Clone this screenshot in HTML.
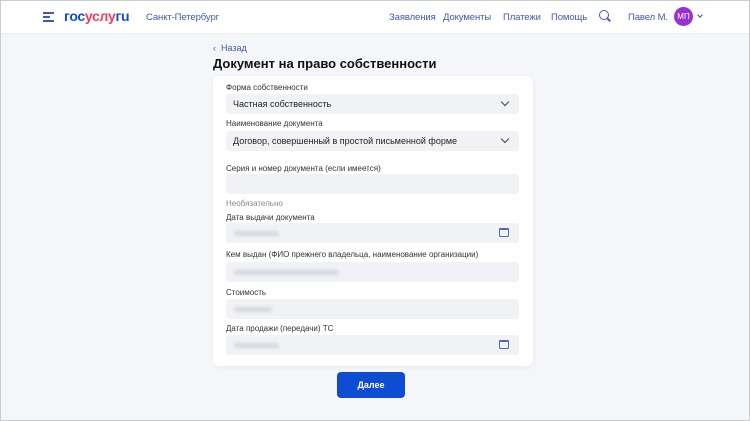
<!DOCTYPE html><html><head><meta charset="utf-8"><style>
*{margin:0;padding:0;box-sizing:border-box}
body{width:750px;height:421px;overflow:hidden;background:#f4f6fa;font-family:"Liberation Sans",sans-serif;position:relative;border:1px solid #c9ccd1}
.hdr{position:absolute;left:0;top:0;width:748px;height:33px;background:#fff;border-bottom:1px solid #eceff3}
.a{position:absolute;white-space:nowrap}
.nav{font-size:9.5px;color:#3f5ba9;top:11px;letter-spacing:-.1px}
.card{position:absolute;left:212px;top:75px;width:320px;height:290px;background:#fff;border-radius:6px;box-shadow:0 1px 4px rgba(0,0,0,.06)}
.lb{position:absolute;left:225px;font-size:8px;color:#333}
.f{position:absolute;left:225px;width:293px;height:20px;background:#f0f2f5;border-radius:3px}
.f span{position:absolute;left:7px;top:5px;font-size:9px;color:#222}
.bl{position:absolute;left:8px;top:8px;height:5px;background:#d5d8de;border-radius:3px;filter:blur(1.5px)}
.chev{position:absolute;right:11px;top:5px;width:6px;height:6px;border-right:1.5px solid #444;border-bottom:1.5px solid #444;transform:rotate(45deg)}
.cal{position:absolute;right:10px;top:5px;width:10px;height:9px;border:1.3px solid #4d6ac2;border-radius:1px;border-top-width:2.5px}
</style></head><body>
<div class="hdr"></div>
<div class="a" style="left:42px;top:11px;width:11px;height:2px;background:#3f5ba9"></div>
<div class="a" style="left:42px;top:15px;width:7px;height:2px;background:#3f5ba9"></div>
<div class="a" style="left:42px;top:19px;width:11px;height:2px;background:#3f5ba9"></div>
<div class="a" style="left:63px;top:7px;font-size:14px;font-weight:bold;color:#0d4cd3;letter-spacing:-.3px">гос<span style="color:#ee3f58">услу</span>гu</div>
<div class="a nav" style="left:145px">Санкт-Петербург</div>
<div class="a nav" style="left:388px">Заявления</div>
<div class="a nav" style="left:442px">Документы</div>
<div class="a nav" style="left:502px">Платежи</div>
<div class="a nav" style="left:550px">Помощь</div>
<div class="a" style="left:598px;top:9px;width:10px;height:10px;border:1.6px solid #3f5ba9;border-radius:50%"></div>
<div class="a" style="left:606px;top:18px;width:4px;height:1.6px;background:#3f5ba9;transform:rotate(45deg)"></div>
<div class="a nav" style="left:627px">Павел М.</div>
<div class="a" style="left:673px;top:6px;width:19px;height:19px;border-radius:50%;background:#9b2fd6;color:#fff;font-size:8px;text-align:center;line-height:19px">МП</div>
<div class="a" style="left:697px;top:12px;width:4px;height:4px;border-right:1.4px solid #3f5ba9;border-bottom:1.4px solid #3f5ba9;transform:rotate(45deg)"></div>
<div class="a" style="left:212px;top:42px;font-size:9px;color:#3f5ba9">‹&nbsp; Назад</div>
<div class="a" style="left:212px;top:55px;font-size:13px;font-weight:bold;color:#111">Документ на право собственности</div>
<div class="card"></div>
<div class="lb" style="top:82px">Форма собственности</div>
<div class="f" style="top:93px"><span>Частная собственность</span><i class="chev"></i></div>
<div class="lb" style="top:118px">Наименование документа</div>
<div class="f" style="top:130px"><span>Договор, совершенный в простой письменной форме</span><i class="chev"></i></div>
<div class="lb" style="top:163px">Серия и номер документа (если имеется)</div>
<div class="f" style="top:173px"></div>
<div class="lb" style="top:198px;color:#888">Необязательно</div>
<div class="lb" style="top:212px">Дата выдачи документа</div>
<div class="f" style="top:222px"><i class="bl" style="width:45px"></i><i class="cal"></i></div>
<div class="lb" style="top:249px">Кем выдан (ФИО прежнего владельца, наименование организации)</div>
<div class="f" style="top:261px"><i class="bl" style="width:105px"></i></div>
<div class="lb" style="top:287px">Стоимость</div>
<div class="f" style="top:298px"><i class="bl" style="width:38px"></i></div>
<div class="lb" style="top:323px">Дата продажи (передачи) ТС</div>
<div class="f" style="top:334px"><i class="bl" style="width:45px"></i><i class="cal"></i></div>
<div class="a" style="left:336px;top:371px;width:68px;height:26px;background:#0d4cd3;border-radius:4px;color:#fff;font-size:9px;font-weight:bold;text-align:center;line-height:26px">Далее</div>
</body></html>
